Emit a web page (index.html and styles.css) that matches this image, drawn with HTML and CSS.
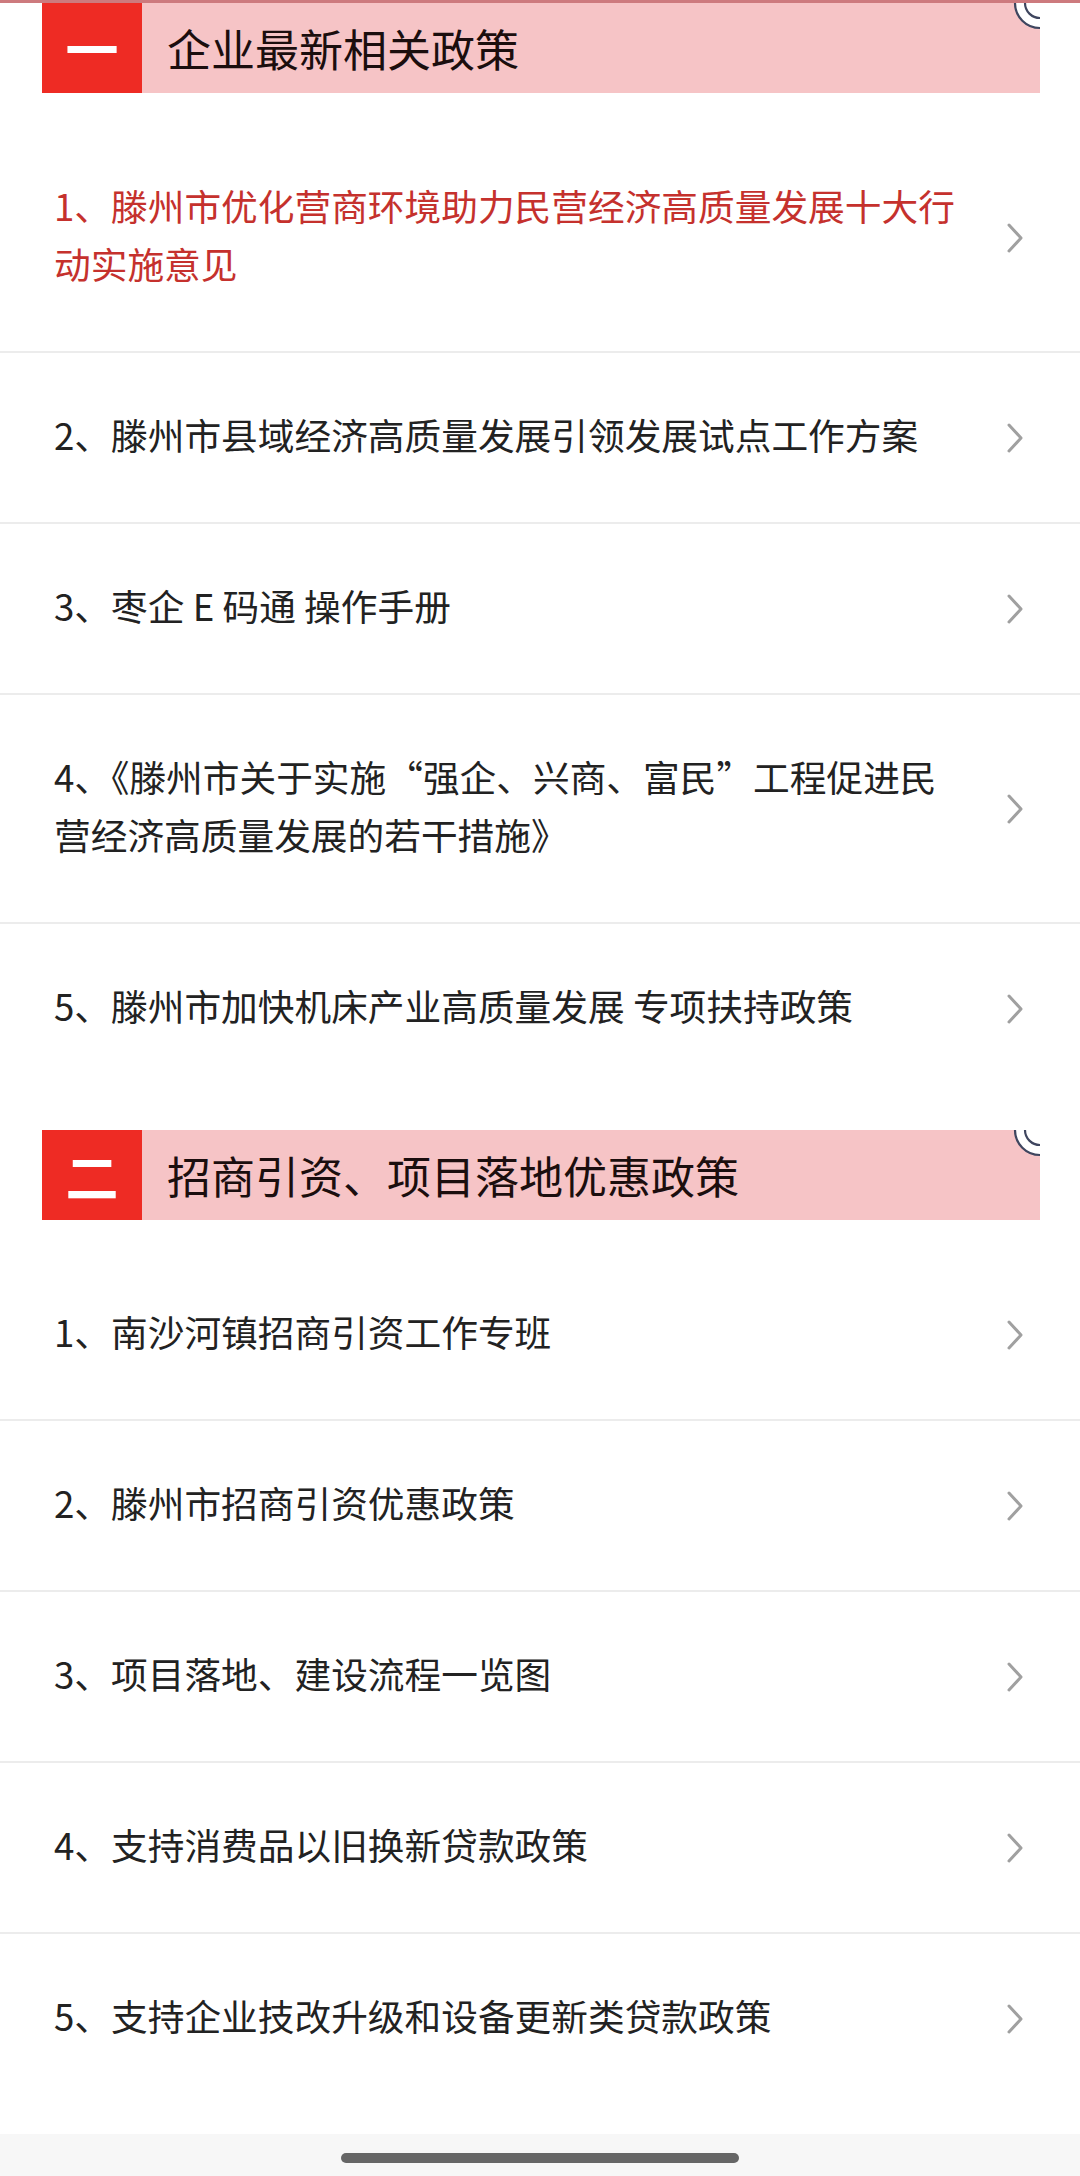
FILE: index.html
```html
<!DOCTYPE html>
<html lang="zh-CN">
<head>
<meta charset="utf-8">
<title>政策</title>
<link rel="stylesheet" href="styles.css">
</head>
<body>
<div class="topline"></div>

<section class="sec sec-first">
  <div class="head">
    <div class="num">一</div>
    <div class="title">企业最新相关政策</div>
    <svg class="deco" width="40" height="40" viewBox="0 0 40 40"><circle cx="40" cy="0" r="25" fill="#fff" stroke="#3f465f" stroke-width="2.2"/><circle cx="40" cy="0" r="15" fill="#fff" stroke="#3f465f" stroke-width="2.2"/></svg>
  </div>
  <ul class="list">
    <li class="item red"><span class="txt">1、滕州市优化营商环境助力民营经济高质量发展十大行<br>动实施意见</span><svg class="chev" width="18" height="30" viewBox="0 0 18 30"><path d="M3 2 L15 15 L3 28" fill="none" stroke="#a0a0a0" stroke-width="3" stroke-linecap="round" stroke-linejoin="round"/></svg></li>
    <li class="item"><span class="txt">2、滕州市县域经济高质量发展引领发展试点工作方案</span><svg class="chev" width="18" height="30" viewBox="0 0 18 30"><path d="M3 2 L15 15 L3 28" fill="none" stroke="#a0a0a0" stroke-width="3" stroke-linecap="round" stroke-linejoin="round"/></svg></li>
    <li class="item"><span class="txt">3、枣企 E 码通 操作手册</span><svg class="chev" width="18" height="30" viewBox="0 0 18 30"><path d="M3 2 L15 15 L3 28" fill="none" stroke="#a0a0a0" stroke-width="3" stroke-linecap="round" stroke-linejoin="round"/></svg></li>
    <li class="item"><span class="txt">4、《滕州市关于实施“强企、兴商、富民”工程促进民<br>营经济高质量发展的若干措施》</span><svg class="chev" width="18" height="30" viewBox="0 0 18 30"><path d="M3 2 L15 15 L3 28" fill="none" stroke="#a0a0a0" stroke-width="3" stroke-linecap="round" stroke-linejoin="round"/></svg></li>
    <li class="item"><span class="txt">5、滕州市加快机床产业高质量发展 专项扶持政策</span><svg class="chev" width="18" height="30" viewBox="0 0 18 30"><path d="M3 2 L15 15 L3 28" fill="none" stroke="#a0a0a0" stroke-width="3" stroke-linecap="round" stroke-linejoin="round"/></svg></li>
  </ul>
</section>

<section class="sec sec-second">
  <div class="head">
    <div class="num">二</div>
    <div class="title">招商引资、项目落地优惠政策</div>
    <svg class="deco" width="40" height="40" viewBox="0 0 40 40"><circle cx="40" cy="0" r="25" fill="#fff" stroke="#3f465f" stroke-width="2.2"/><circle cx="40" cy="0" r="15" fill="#fff" stroke="#3f465f" stroke-width="2.2"/></svg>
  </div>
  <ul class="list">
    <li class="item"><span class="txt">1、南沙河镇招商引资工作专班</span><svg class="chev" width="18" height="30" viewBox="0 0 18 30"><path d="M3 2 L15 15 L3 28" fill="none" stroke="#a0a0a0" stroke-width="3" stroke-linecap="round" stroke-linejoin="round"/></svg></li>
    <li class="item"><span class="txt">2、滕州市招商引资优惠政策</span><svg class="chev" width="18" height="30" viewBox="0 0 18 30"><path d="M3 2 L15 15 L3 28" fill="none" stroke="#a0a0a0" stroke-width="3" stroke-linecap="round" stroke-linejoin="round"/></svg></li>
    <li class="item"><span class="txt">3、项目落地、建设流程一览图</span><svg class="chev" width="18" height="30" viewBox="0 0 18 30"><path d="M3 2 L15 15 L3 28" fill="none" stroke="#a0a0a0" stroke-width="3" stroke-linecap="round" stroke-linejoin="round"/></svg></li>
    <li class="item"><span class="txt">4、支持消费品以旧换新贷款政策</span><svg class="chev" width="18" height="30" viewBox="0 0 18 30"><path d="M3 2 L15 15 L3 28" fill="none" stroke="#a0a0a0" stroke-width="3" stroke-linecap="round" stroke-linejoin="round"/></svg></li>
    <li class="item"><span class="txt">5、支持企业技改升级和设备更新类贷款政策</span><svg class="chev" width="18" height="30" viewBox="0 0 18 30"><path d="M3 2 L15 15 L3 28" fill="none" stroke="#a0a0a0" stroke-width="3" stroke-linecap="round" stroke-linejoin="round"/></svg></li>
  </ul>
</section>

<div class="navbar"><div class="pill"></div></div>
</body>
</html>
```

FILE: styles.css
```css
* { box-sizing: border-box; }
html, body {
  margin: 0;
  padding: 0;
  background: #ffffff;
}
body {
  width: 1080px;
  font-family: "Noto Sans CJK SC", "Noto Sans", sans-serif;
  color: #222222;
}
.topline {
  height: 3px;
  background: #cd7a7e;
}
.sec-second {
  margin-top: 37px;
}
.head {
  position: relative;
  overflow: hidden;
  margin: 0 40px 0 42px;
  height: 90px;
  background: #f6c4c6;
  display: flex;
  align-items: center;
}
.num {
  width: 100px;
  height: 90px;
  flex: none;
  background: #ee2b24;
  color: #ffffff;
  font-size: 53px;
  font-weight: 700;
  display: flex;
  align-items: center;
  justify-content: center;
  line-height: 1;
}
.title {
  margin-left: 25px;
  font-size: 44px;
  color: #1b0e0e;
  line-height: 1;
}
.deco {
  position: absolute;
  top: 0;
  right: 0;
}
.list {
  list-style: none;
  margin: 31px 0 0 0;
  padding: 0;
}
.sec-second .list {
  margin-top: 30px;
}
.item {
  display: flex;
  align-items: center;
  justify-content: space-between;
  padding: 55.5px 56px 55.5px 54px;
  border-bottom: 2px solid #ececec;
}
.item:last-child {
  border-bottom: none;
}
.txt {
  font-size: 36.7px;
  line-height: 58px;
  white-space: nowrap;
  color: #222222;
  margin: -4px 0 4px 0;
}
.red .txt {
  color: #c5312d;
}
.chev {
  flex: none;
  margin-right: 0;
}
.navbar {
  margin-top: 31px;
  height: 42px;
  background: #f7f7f7;
  display: flex;
  justify-content: center;
  padding-top: 19px;
}
.pill {
  width: 398px;
  height: 10px;
  border-radius: 5px;
  background: #666666;
}
```
